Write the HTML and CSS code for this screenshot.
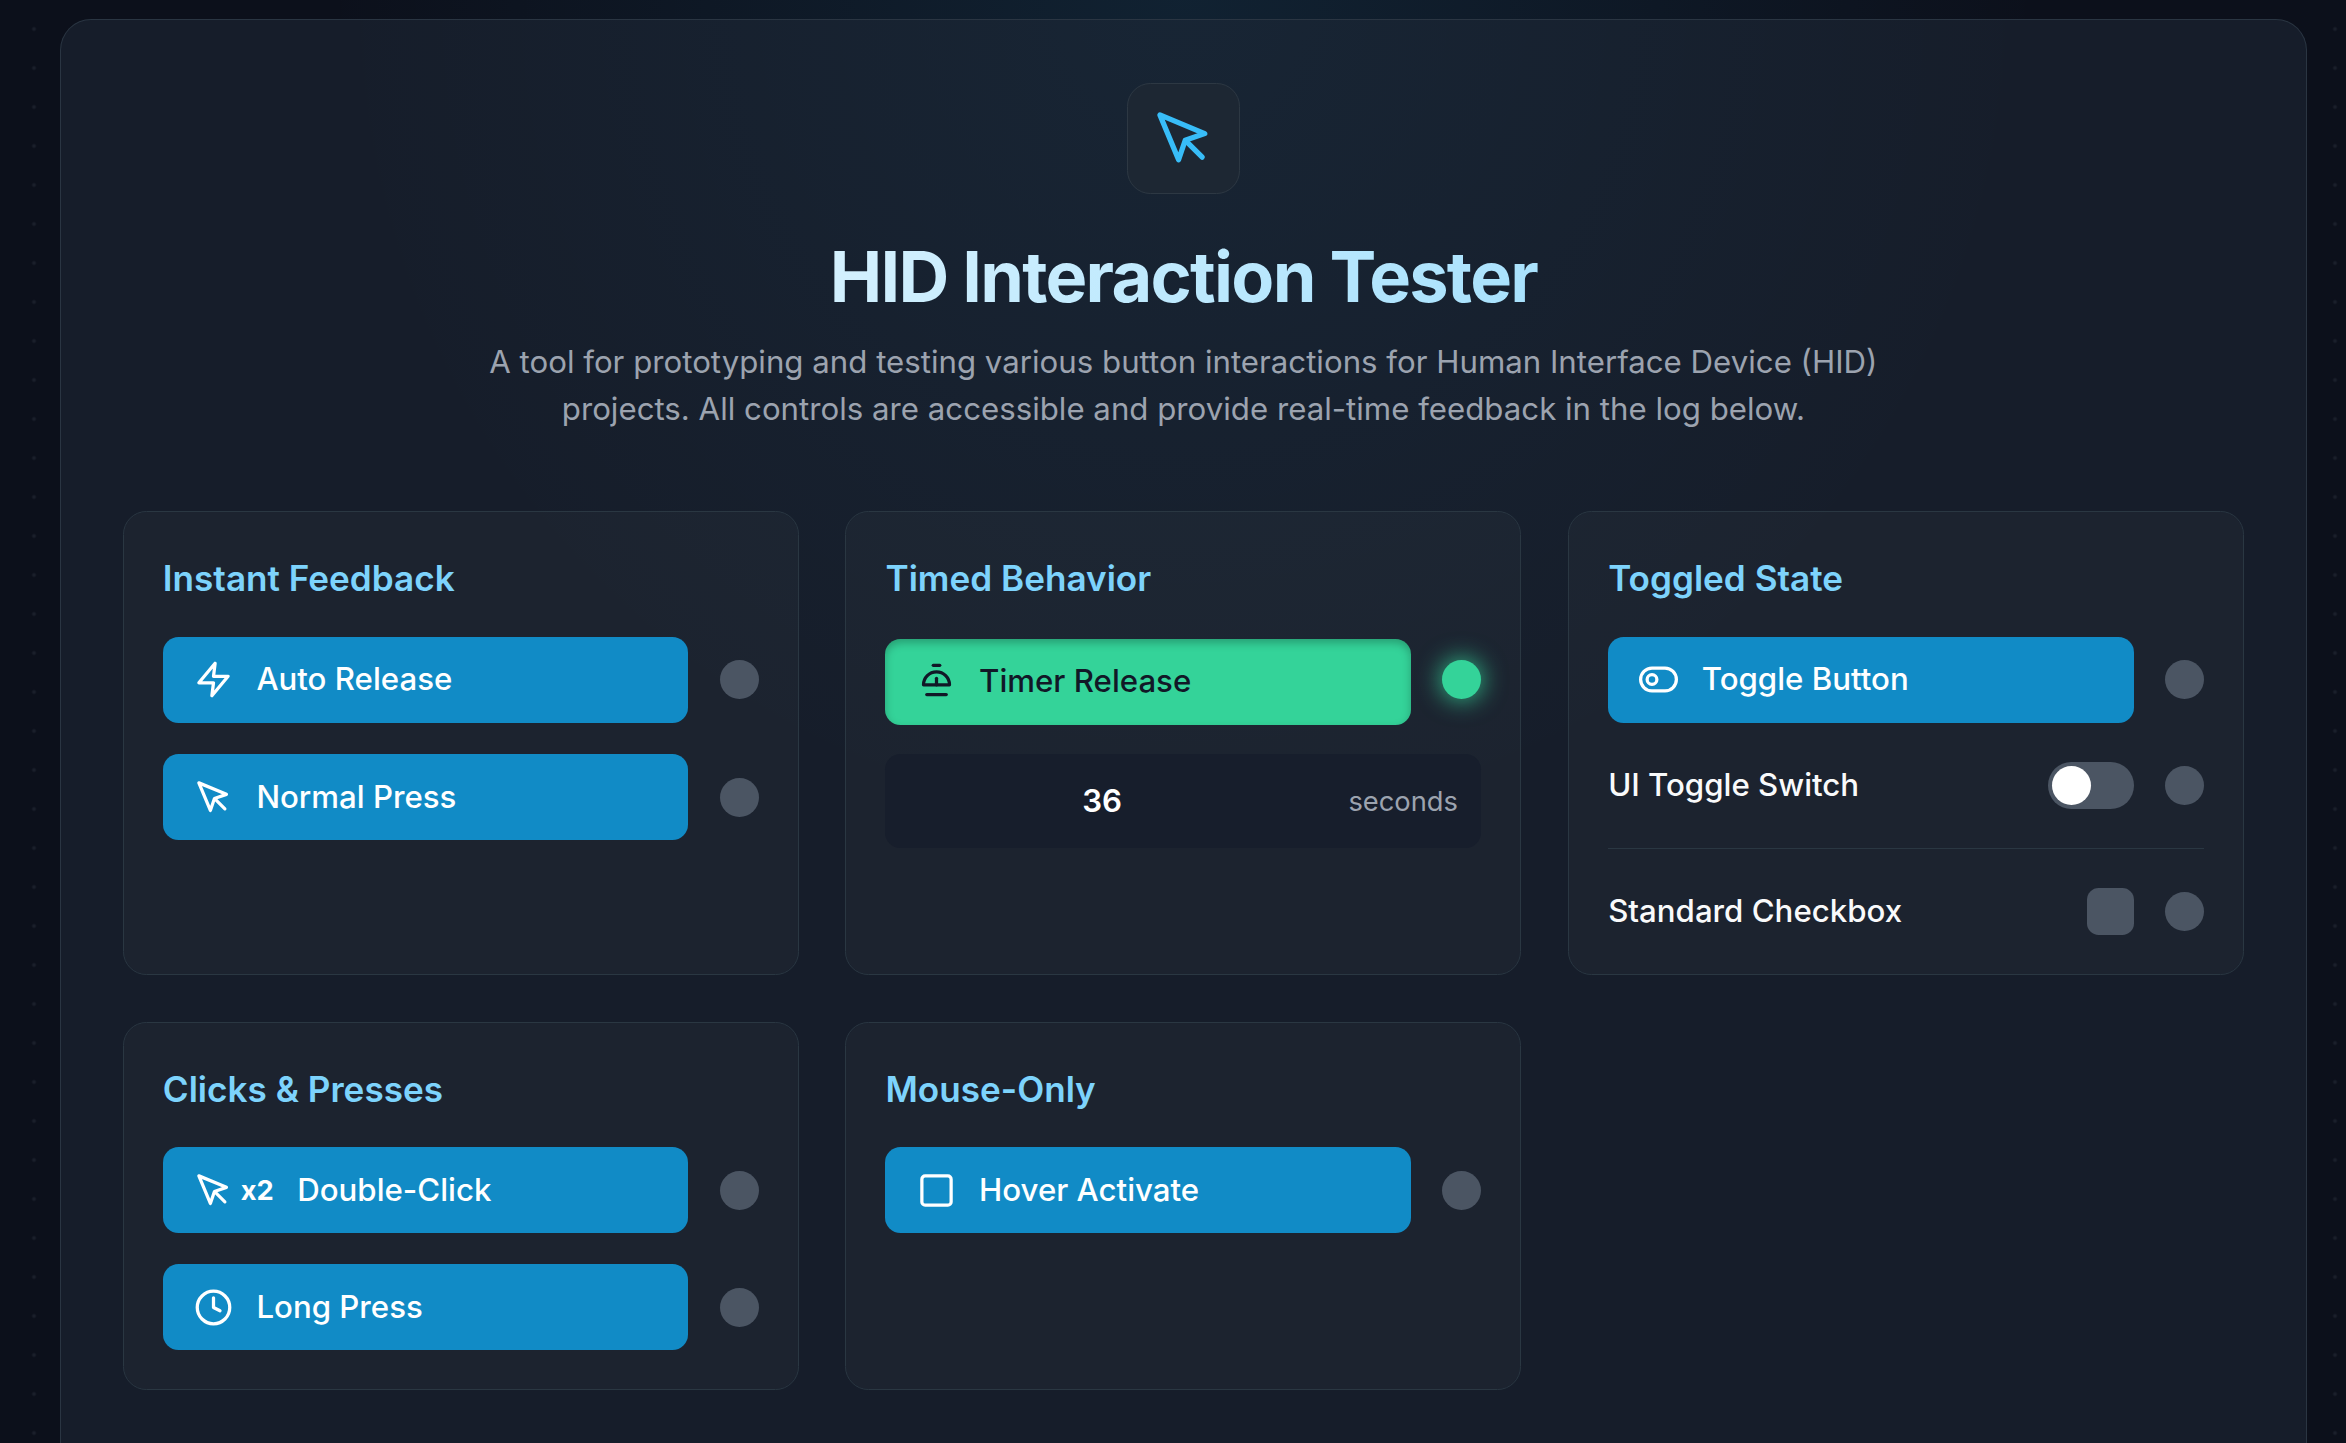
FILE: index.html
```html
<!DOCTYPE html>
<html lang="en">
<head>
<meta charset="utf-8">
<title>HID Interaction Tester</title>
<link rel="stylesheet" href="styles.css">
</head>
<body>
<main class="panel">
  <header class="header">
    <div class="logo">
      <svg class="logo-icon" viewBox="0 0 24 24"><path d="M3 3l7.07 16.97 2.51-7.39 7.39-2.51L3 3z"/><path d="M13 13l6 6"/></svg>
    </div>
    <h1 class="title">HID Interaction Tester</h1>
    <p class="intro">A tool for prototyping and testing various button interactions for Human Interface Device (HID) projects. All controls are accessible and provide real-time feedback in the log below.</p>
  </header>

  <div class="grid">
    <section class="card">
      <h2 class="card-title">Instant Feedback</h2>
      <div class="rows">
        <div class="row">
          <button class="btn"><svg class="icon" viewBox="0 0 24 24"><path d="M13 2L3 14h9l-1 8 10-12h-9l1-8z"/></svg><span>Auto Release</span></button>
          <span class="led"></span>
        </div>
        <div class="row">
          <button class="btn"><svg class="icon" viewBox="0 0 24 24"><path d="M3 3l7.07 16.97 2.51-7.39 7.39-2.51L3 3z"/><path d="M13 13l6 6"/></svg><span>Normal Press</span></button>
          <span class="led"></span>
        </div>
      </div>
    </section>

    <section class="card">
      <h2 class="card-title">Timed Behavior</h2>
      <div class="rows">
        <div class="row">
          <button class="btn btn-active"><svg class="icon" viewBox="0 0 24 24"><path d="M10 2h4"/><path d="M4 14a8 8 0 0 1 16 0z"/><path d="M12 14v-4"/><path d="M6 20h12"/></svg><span>Timer Release</span></button>
          <span class="led led-on"></span>
        </div>
        <div class="timer">
          <span class="timer-value">36</span>
          <span class="timer-unit">seconds</span>
        </div>
      </div>
    </section>

    <section class="card">
      <h2 class="card-title">Toggled State</h2>
      <div class="rows">
        <div class="row">
          <button class="btn"><svg class="icon" viewBox="0 0 24 24"><rect x="1" y="5" width="22" height="14" rx="7"/><circle cx="8" cy="12" r="3"/></svg><span>Toggle Button</span></button>
          <span class="led"></span>
        </div>
        <div class="row row-switch">
          <span class="label">UI Toggle Switch</span>
          <span class="switch"><span class="knob"></span></span>
          <span class="led"></span>
        </div>
        <div class="row row-check">
          <span class="label">Standard Checkbox</span>
          <span class="checkbox"></span>
          <span class="led"></span>
        </div>
      </div>
    </section>

    <section class="card">
      <h2 class="card-title">Clicks &amp; Presses</h2>
      <div class="rows">
        <div class="row">
          <button class="btn"><span class="icon-pair"><svg class="icon" viewBox="0 0 24 24"><path d="M3 3l7.07 16.97 2.51-7.39 7.39-2.51L3 3z"/><path d="M13 13l6 6"/></svg><span class="times">x2</span></span><span>Double-Click</span></button>
          <span class="led"></span>
        </div>
        <div class="row">
          <button class="btn"><svg class="icon" viewBox="0 0 24 24"><circle cx="12" cy="12" r="10"/><path d="M12 6v6l4 2"/></svg><span>Long Press</span></button>
          <span class="led"></span>
        </div>
      </div>
    </section>

    <section class="card">
      <h2 class="card-title">Mouse-Only</h2>
      <div class="rows">
        <div class="row">
          <button class="btn"><svg class="icon" viewBox="0 0 24 24"><rect x="3" y="3" width="18" height="18" rx="2"/></svg><span>Hover Activate</span></button>
          <span class="led"></span>
        </div>
      </div>
    </section>
  </div>
</main>
</body>
</html>
```
FILE: styles.css
```css
* { box-sizing: border-box; }

body {
  margin: 0;
  height: 1443px;
  overflow: hidden;
  padding: 19px 39px 0 60px;
  font-family: Inter, "Liberation Sans", sans-serif;
  font-size: 31.23px;
  line-height: 46.8px;
  color: #f9fafb;
  background-color: #0c101b;
  background-image:
    radial-gradient(circle at 1183px 0, rgba(56, 189, 248, 0.1), transparent 860px),
    radial-gradient(circle, #1a1f2a 1.6px, transparent 2.3px);
  background-size: 100% 100%, 39px 39px;
  background-position: 0 0, 14.5px 9.5px;
}

.panel {
  width: 2247px;
  height: 1424px;
  padding: 63px 62px 0 61.8px;
  border: 1px solid #2a3542;
  border-bottom: 0;
  border-radius: 31.2px 31.2px 0 0;
  background:
    radial-gradient(circle at 1122px -20px, rgba(56, 189, 248, 0.05), transparent 860px),
    #161d2a;
}

.header {
  display: flex;
  flex-direction: column;
  align-items: center;
  height: 428.25px;
  text-align: center;
}

.logo {
  display: flex;
  align-items: center;
  justify-content: center;
  width: 113px;
  height: 111px;
  border: 1px solid #2d3843;
  border-radius: 23.4px;
  background: #1d2733;
}

.logo-icon,
.icon {
  flex: none;
  fill: none;
  stroke: currentColor;
  stroke-width: 2;
  stroke-linecap: round;
  stroke-linejoin: round;
}

.logo-icon {
  width: 63.4px;
  height: 63.4px;
  color: #38bdf8;
}

.icon {
  width: 39px;
  height: 39px;
}

.title {
  width: 100%;
  margin: 43.5px 0 23.4px;
  font-size: 70.25px;
  line-height: 78px;
  font-weight: 700;
  letter-spacing: -0.025em;
  color: transparent;
  background: linear-gradient(135deg, #fff, #7dd3fc);
  -webkit-background-clip: text;
  background-clip: text;
}

.intro {
  width: 1420px;
  margin: 0;
  color: #9ca3af;
}

.grid {
  display: grid;
  grid-template-columns: repeat(3, 1fr);
  gap: 46.9px 46.8px;
}

.card {
  padding: 39px;
  border: 1px solid #2a3742;
  border-radius: 23.4px;
  background: rgba(255, 255, 255, 0.027);
  background-clip: padding-box;
}

.card-title {
  margin: 0 0 31.2px;
  font-size: 35.13px;
  line-height: 54.6px;
  font-weight: 600;
  color: #7dd3fc;
}

.rows {
  display: flex;
  flex-direction: column;
  gap: 31.3px;
}

.row {
  display: flex;
  align-items: center;
  gap: 31.2px;
}

.btn {
  display: flex;
  flex: 1;
  align-items: center;
  gap: 23.4px;
  height: 85.8px;
  padding: 0 31.2px;
  border: 0;
  border-radius: 15.6px;
  font: inherit;
  font-weight: 500;
  line-height: 47px;
  color: #fff;
  background: #118bc6;
}

.btn-active {
  color: #111827;
  background: #34d399;
  box-shadow: inset 0 4px 8px rgba(0, 0, 0, 0.25);
  transform: translateY(2px);
}

.icon-pair {
  display: flex;
  align-items: center;
  gap: 7.8px;
}

.times {
  font-size: 27.3px;
  font-weight: 700;
}

.led {
  flex: none;
  width: 39px;
  height: 39px;
  border-radius: 50%;
  background: #4b5563;
}

.led-on {
  background: #34d399;
  box-shadow: 0 0 23px 2px rgba(52, 211, 153, 0.8);
}

.timer {
  display: flex;
  align-items: center;
  height: 94px;
  padding: 0 23.4px;
  border-radius: 15.6px;
  background: #171e2c;
}

.timer-value {
  flex: 1;
  padding-right: 53px;
  font-weight: 600;
  text-align: center;
  color: #fff;
}

.timer-unit {
  padding-top: 2px;
  font-size: 27.3px;
  color: #9ca3af;
}

.label {
  flex: 1;
  font-weight: 500;
}

.row-switch { padding: 7.8px 0; }

.row-check {
  padding-top: 39px;
  border-top: 1px solid #2a3742;
}

.switch {
  width: 85.8px;
  height: 46.8px;
  padding: 3.9px;
  border-radius: 23.4px;
  background: #4b5563;
}

.knob {
  display: block;
  width: 39px;
  height: 39px;
  border-radius: 50%;
  background: #fff;
}

.checkbox {
  width: 46.8px;
  height: 46.8px;
  border-radius: 11.7px;
  background: #4b5563;
}
```
